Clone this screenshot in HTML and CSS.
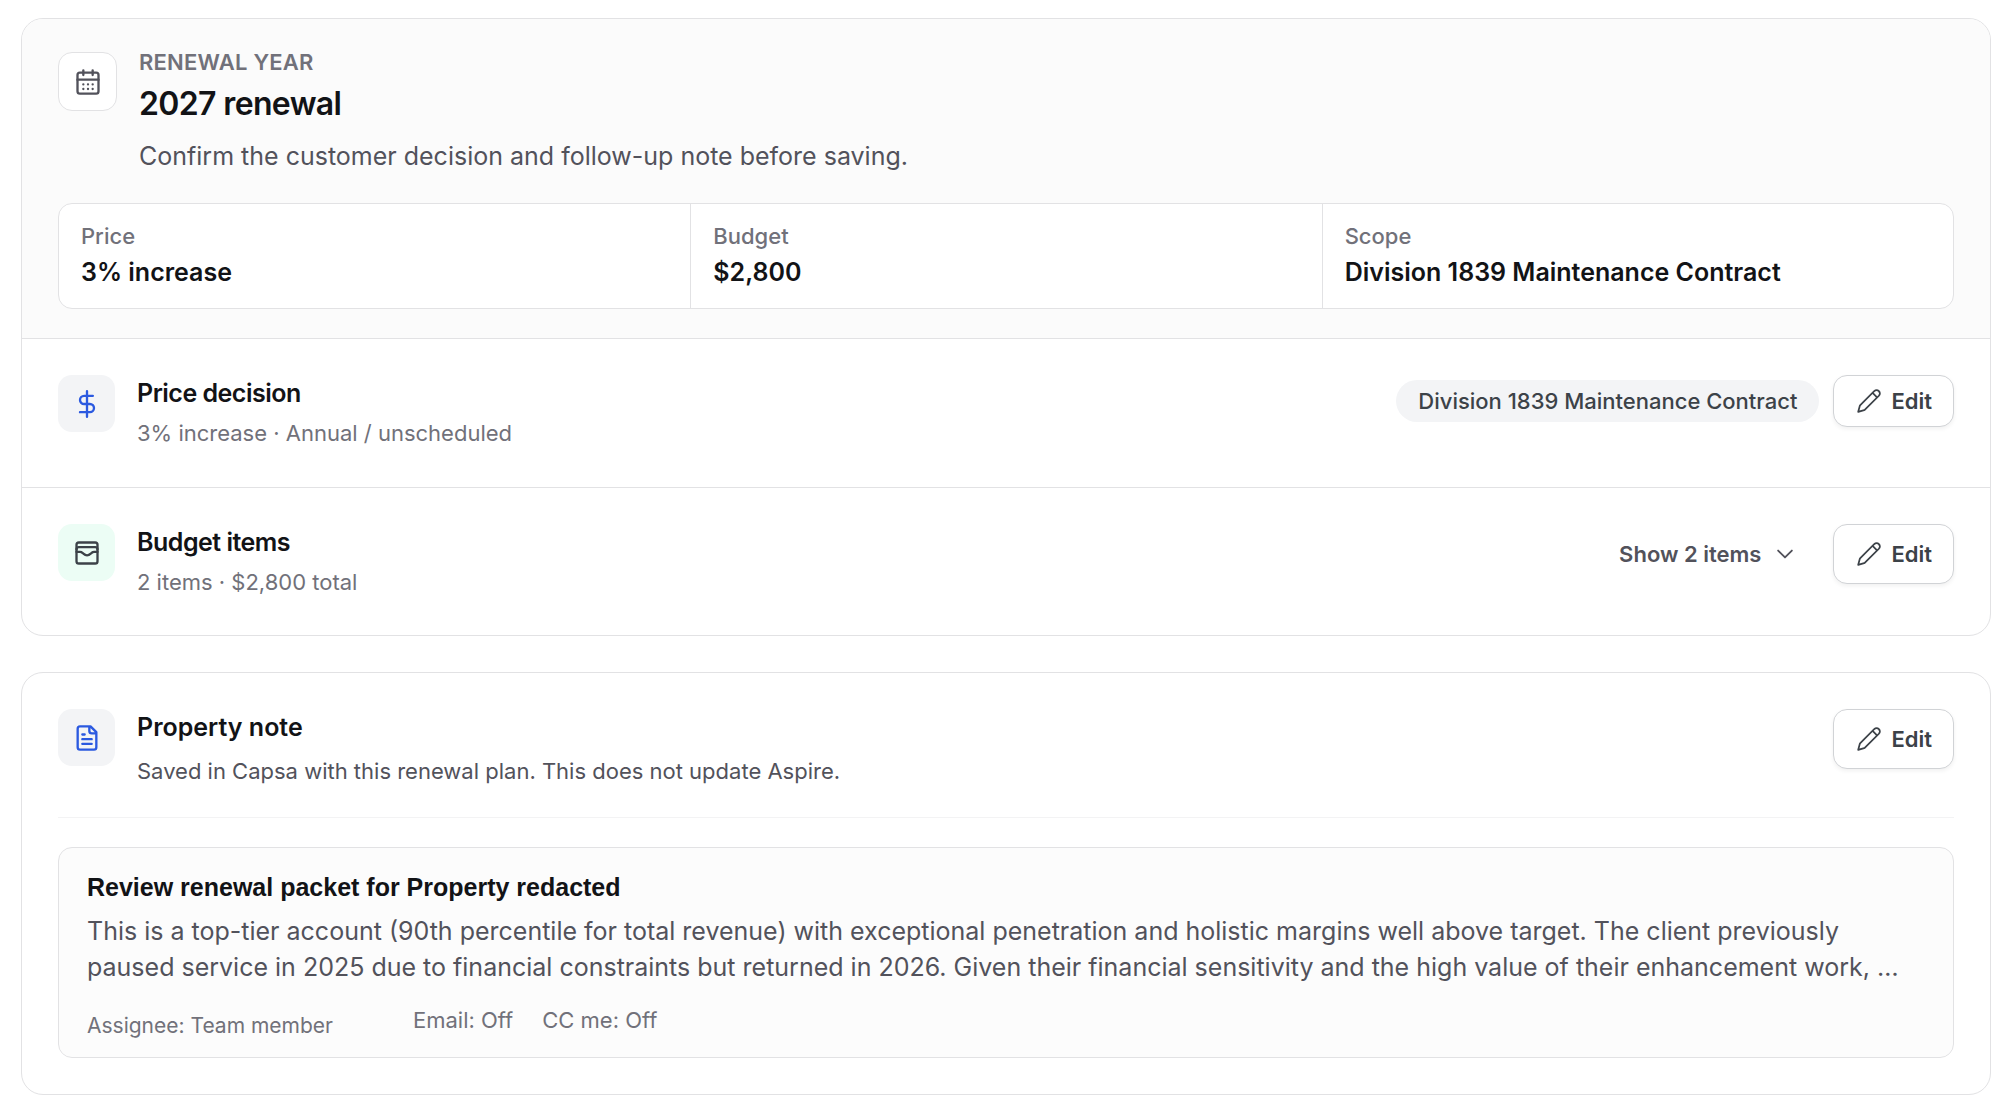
FILE: index.html
```html
<!DOCTYPE html>
<html lang="en">
<head>
  <meta charset="utf-8">
  <meta name="viewport" content="width=device-width, initial-scale=1">
  <title>2027 renewal</title>
  <link rel="stylesheet" href="styles.css">
</head>
<body>
  <svg class="sprite" aria-hidden="true">
    <symbol id="pencil" viewBox="0 0 24 24">
      <path d="M21.03 2.97a3.58 3.58 0 0 1 0 5.06L9.06 20a2.25 2.25 0 0 1-1 .58l-5.11 1.4a.75.75 0 0 1-.92-.93l1.4-5.11c.1-.38.3-.72.57-1L15.97 2.97c1.4-1.4 3.66-1.4 5.06 0ZM15 6.06 5.06 16a.75.75 0 0 0-.19.33l-1.05 3.85 3.85-1.05A.75.75 0 0 0 8 18.94L17.94 9 15 6.06Zm2.03-2.03L16.06 5 19 7.94l.97-.97a2.08 2.08 0 0 0-2.94-2.94Z"/>
    </symbol>
  </svg>

  <main class="page">
    <section class="card">
      <header class="summary">
        <div class="summary-top">
          <span class="tile tile-outline">
            <svg class="icon" viewBox="0 0 24 24" aria-hidden="true"><path d="M8 2v4M16 2v4M3 10h18M8 14h.01M12 14h.01M16 14h.01M8 18h.01M12 18h.01M16 18h.01"/><rect x="3" y="4" width="18" height="18" rx="2"/></svg>
          </span>
          <div>
            <p class="eyebrow">RENEWAL YEAR</p>
            <h1 class="heading">2027 renewal</h1>
            <p class="lead">Confirm the customer decision and follow-up note before saving.</p>
          </div>
        </div>
        <dl class="stats">
          <div class="stat"><dt>Price</dt><dd>3% increase</dd></div>
          <div class="stat"><dt>Budget</dt><dd>$2,800</dd></div>
          <div class="stat"><dt>Scope</dt><dd>Division 1839 Maintenance Contract</dd></div>
        </dl>
      </header>

      <section class="row">
        <span class="tile tile-blue">
          <svg class="icon" viewBox="0 0 24 24" aria-hidden="true"><path d="M12 1v22M17 5H9.500a3.500 3.500 0 0 0 0 7h5a3.500 3.500 0 0 1 0 7H6"/></svg>
        </span>
        <div class="row-text">
          <h2 class="row-title tight">Price decision</h2>
          <p class="row-sub">3% increase · Annual / unscheduled</p>
        </div>
        <div class="actions">
          <span class="pill">Division 1839 Maintenance Contract</span>
          <button class="button button-compact" type="button"><svg class="icon solid" aria-hidden="true"><use href="#pencil"/></svg>Edit</button>
        </div>
      </section>

      <section class="row">
        <span class="tile tile-green">
          <svg class="icon" viewBox="0 0 24 24" aria-hidden="true"><rect x="3" y="3" width="18" height="18" rx="2"/><path d="M3 9a2 2 0 0 1 2-2h14a2 2 0 0 1 2 2M3 11h3c.8 0 1.6.3 2.1.9l1.1.9c1.6 1.6 4.1 1.6 5.7 0l1.1-.9c.5-.5 1.3-.9 2.1-.9H21"/></svg>
        </span>
        <div class="row-text">
          <h2 class="row-title tight">Budget items</h2>
          <p class="row-sub">2 items · $2,800 total</p>
        </div>
        <div class="actions">
          <button class="toggle" type="button">Show 2 items<svg class="chevron" viewBox="0 0 24 24" aria-hidden="true"><path d="m19.500 8.250-7.500 7.500-7.500-7.500"/></svg></button>
          <button class="button" type="button"><svg class="icon solid" aria-hidden="true"><use href="#pencil"/></svg>Edit</button>
        </div>
      </section>
    </section>

    <section class="card note-card">
      <header class="note-head">
        <span class="tile tile-blue">
          <svg class="icon" viewBox="0 0 24 24" aria-hidden="true"><path d="M15 2H6a2 2 0 0 0-2 2v16a2 2 0 0 0 2 2h12a2 2 0 0 0 2-2V7ZM14 2v4a2 2 0 0 0 2 2h4M10 9H8M16 13H8M16 17H8"/></svg>
        </span>
        <div class="row-text">
          <h2 class="row-title">Property note</h2>
          <p class="row-sub note-sub">Saved in Capsa with this renewal plan. This does not update Aspire.</p>
        </div>
        <div class="actions">
          <button class="button" type="button"><svg class="icon solid" aria-hidden="true"><use href="#pencil"/></svg>Edit</button>
        </div>
      </header>
      <article class="note">
        <h3 class="note-title">Review renewal packet for Property redacted</h3>
        <p class="note-body">This is a top-tier account (90th percentile for total revenue) with exceptional penetration and holistic margins well above target. The client previously paused service in 2025 due to financial constraints but returned in 2026. Given their financial sensitivity and the high value of their enhancement work, …</p>
        <div class="meta">
          <span class="assignee">Assignee: Team member</span>
          <div class="flags"><span>Email: Off</span><span>CC me: Off</span></div>
        </div>
      </article>
    </section>
  </main>
</body>
</html>
```
FILE: styles.css
```css
* { box-sizing: border-box; }

body {
  margin: 0;
  background: #fff;
  color: #121316;
  font: 400 22px/28px Inter, "Liberation Sans", sans-serif;
}

h1, h2, h3, p, dl, dd { margin: 0; }

.sprite { position: absolute; width: 0; height: 0; }

.page {
  display: flex;
  flex-direction: column;
  gap: 36px;
  padding: 18px 25px 18px 21px;
}

.card {
  overflow: hidden;
  border: 1px solid #e2e2e4;
  border-radius: 22px;
  background: #fff;
}

.icon {
  flex: none;
  width: 28px;
  height: 28px;
  fill: none;
  stroke: currentColor;
  stroke-width: 2;
  stroke-linecap: round;
  stroke-linejoin: round;
}

.solid { fill: currentColor; stroke: none; }

/* Summary header */
.summary {
  padding: 29px 36px 29px;
  background: #fbfbfb;
}

.summary-top {
  display: flex;
  gap: 22px;
}

.tile {
  display: grid;
  flex: none;
  place-items: center;
  width: 57px;
  height: 57px;
  border-radius: 14px;
}

.tile-outline {
  margin-top: 4px;
  width: 59px;
  height: 59px;
  border: 1px solid #e2e2e4;
  background: #fff;
  color: #52525b;
}

.tile-blue { background: #f3f4f6; color: #2b59e0; }
.tile-green { background: #ecfdf5; color: #3c4248; }

.eyebrow {
  color: #71717a;
  font-weight: 600;
  letter-spacing: 0.01em;
}

.heading {
  margin-top: 8px;
  font-size: 32px;
  font-weight: 600;
  line-height: 40px;
  letter-spacing: -0.02em;
}

.lead {
  margin-top: 14px;
  color: #52525b;
  font-size: 25px;
  line-height: 36px;
}

.stats {
  display: grid;
  grid-template-columns: repeat(3, 1fr);
  margin-top: 29px;
  border: 1px solid #e2e2e4;
  border-radius: 14px;
  background: #fff;
}

.stat { padding: 18px 22px 20px; }
.stat + .stat { border-left: 1px solid #e2e2e4; }
.stat dt { color: #71717a; font-weight: 500; }

.stat dd {
  margin-top: 6px;
  font-size: 25px;
  font-weight: 600;
  line-height: 32px;
}

/* Section rows */
.row,
.note-head {
  display: flex;
  align-items: flex-start;
  gap: 22px;
}

.row {
  padding: 36px 36px 40px;
  border-top: 1px solid #e2e2e4;
}

.row:last-child { padding-bottom: 39px; }

.row-text { flex: 1; min-width: 0; }

.row-title {
  font-size: 25px;
  font-weight: 600;
  line-height: 36px;
}

.tight { letter-spacing: -0.02em; }

.row-sub { margin-top: 8px; color: #71717a; }
.note-sub { margin-top: 12px; color: #52525b; }

.actions {
  display: flex;
  align-items: center;
  gap: 14px;
}

.pill {
  padding: 7px 22px;
  border-radius: 22px;
  background: #f3f4f6;
  color: #3c4248;
  font-weight: 500;
}

.button,
.toggle {
  display: flex;
  align-items: center;
  font: inherit;
  font-weight: 600;
  cursor: pointer;
}

.button {
  gap: 8px;
  height: 60px;
  padding: 0 21px;
  border: 1px solid #d1d3d6;
  border-radius: 14px;
  background: #fff;
  box-shadow: 0 2px 4px rgba(0, 0, 0, 0.06);
  color: #3c4248;
}

.button-compact { height: 52px; }

.toggle {
  gap: 13px;
  padding: 0 23px;
  border: 0;
  background: none;
  color: #52525b;
}

.chevron {
  width: 22px;
  height: 22px;
  fill: none;
  stroke: currentColor;
  stroke-width: 2;
  stroke-linecap: round;
  stroke-linejoin: round;
}

/* Property note */
.note-card { padding: 36px; }

.note-head {
  padding-bottom: 32px;
  border-bottom: 1px solid #f3f3f4;
}

.note {
  margin-top: 29px;
  padding: 24px 28px 17px;
  border: 1px solid #e2e2e4;
  border-radius: 14px;
  background: #fcfcfc;
}

.note-title {
  font: 700 25px/30px "Liberation Sans", Arial, sans-serif;
}

.note-body {
  margin-top: 11px;
  color: #52525b;
  font-size: 25px;
  line-height: 36px;
}

.meta {
  display: flex;
  align-items: flex-end;
  gap: 80px;
  margin-top: 21px;
  color: #71717a;
}

.assignee { font-size: 21px; }

.flags {
  display: flex;
  gap: 29px;
  padding-bottom: 6px;
}
```
